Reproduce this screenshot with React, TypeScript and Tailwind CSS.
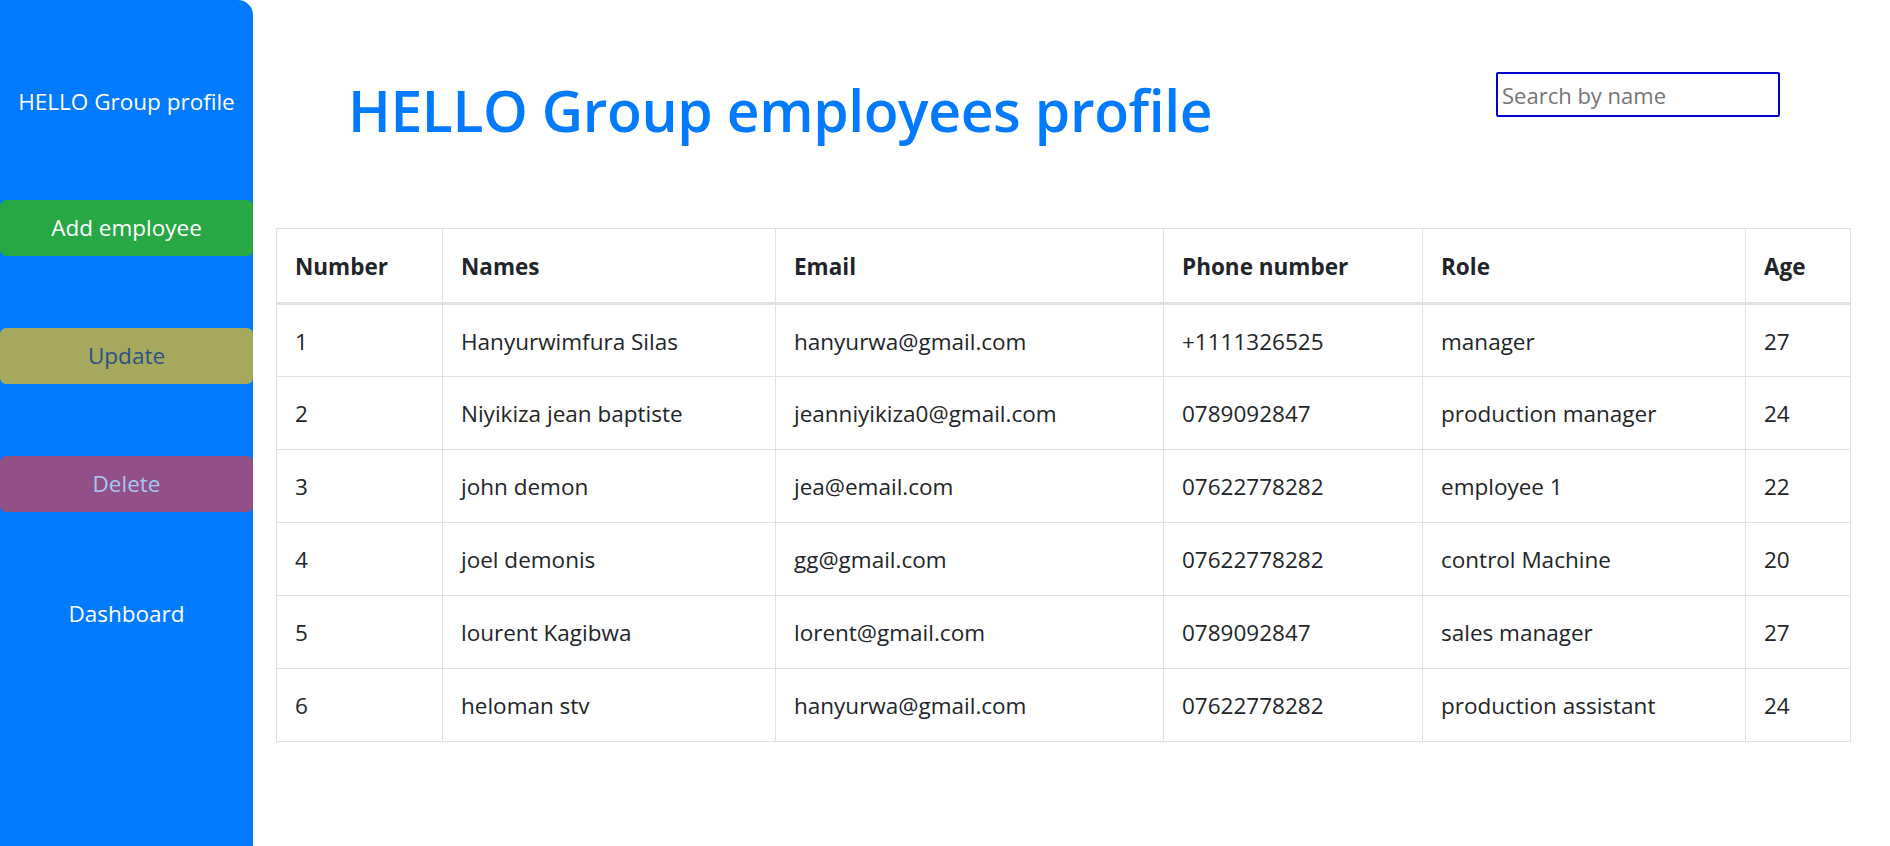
import React from "react";

const rows = [
  ["1", "Hanyurwimfura Silas", "hanyurwa@gmail.com", "+1111326525", "manager", "27"],
  ["2", "Niyikiza jean baptiste", "jeanniyikiza0@gmail.com", "0789092847", "production manager", "24"],
  ["3", "john demon", "jea@email.com", "07622778282", "employee 1", "22"],
  ["4", "joel demonis", "gg@gmail.com", "07622778282", "control Machine", "20"],
  ["5", "lourent Kagibwa", "lorent@gmail.com", "0789092847", "sales manager", "27"],
  ["6", "heloman stv", "hanyurwa@gmail.com", "07622778282", "production assistant", "24"],
];

const headers = [
  ["Number", "w-[166px]"],
  ["Names", "w-[333px]"],
  ["Email", "w-[388px]"],
  ["Phone number", "w-[259px]"],
  ["Role", "w-[323px]"],
  ["Age", "w-[105px]"],
];

export default function App() {
  return (
    <div
      className="flex w-[1890px] h-[846px] bg-white overflow-hidden text-[#212529]"
      style={{ fontFamily: '"Open Sans", "Noto Sans", sans-serif' }}
    >
      <aside className="w-[253px] h-[846px] shrink-0 bg-[#007bff] rounded-tr-[15px] flex flex-col text-[22.5px]">
        <div className="mt-[84px] h-[36px] leading-[36px] text-center text-white">HELLO Group profile</div>
        <button className="mt-[80px] h-[56px] w-full rounded-[6px] bg-[#28a745] text-white leading-[36px]">
          Add employee
        </button>
        <button className="mt-[72px] h-[56px] w-full rounded-[6px] bg-[#a6a85e] text-[#2a5383] leading-[36px]">
          Update
        </button>
        <button className="mt-[72px] h-[56px] w-full rounded-[6px] bg-[#925086] text-[#a5c8f2] leading-[36px]">
          Delete
        </button>
        <div className="mt-[84px] h-[36px] leading-[36px] text-center text-white">Dashboard</div>
      </aside>

      <main className="flex-1 flex flex-col pl-[23px] pr-[40px]">
        <div className="flex items-start h-[228px]">
          <h1 className="ml-[72px] mt-[77px] text-[57px] leading-[66px] font-semibold text-[#007bff] tracking-[-0.4px] whitespace-nowrap">
            HELLO Group employees profile
          </h1>
          <input
            placeholder="Search by name"
            className="ml-auto mr-[71px] mt-[72px] w-[284px] h-[45px] border-2 border-[#0000cd] rounded-[2px] px-[4px] text-[22px] placeholder:text-[#757575] outline-none"
          />
        </div>
        <table className="table-fixed w-[1574px] border-collapse text-[22.5px]">
          <thead>
            <tr>
              {headers.map(([h, w]) => (
                <th
                  key={h}
                  className={`${w} border border-[#dee2e6] border-b-[3px] text-left font-bold px-[18px] pt-[3px] h-[75px] leading-[36px]`}
                >
                  {h}
                </th>
              ))}
            </tr>
          </thead>
          <tbody>
            {rows.map((r) => (
              <tr key={r[0]}>
                {r.map((c, i) => (
                  <td key={i} className="border border-[#dee2e6] px-[18px] pt-[2px] h-[73px] leading-[36px]">
                    {c}
                  </td>
                ))}
              </tr>
            ))}
          </tbody>
        </table>
      </main>
    </div>
  );
}
